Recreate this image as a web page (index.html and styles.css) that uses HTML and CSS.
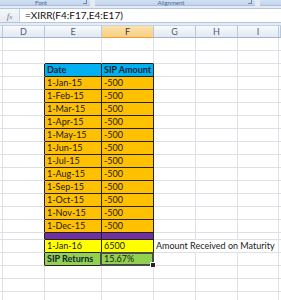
FILE: index.html
```html
<!DOCTYPE html>
<html>
<head>
<meta charset="utf-8">
<link rel="stylesheet" href="styles.css">
</head>
<body>
<div class="ribbon">
  <div class="grp g1"><span class="glabel">Font</span><span class="launch"></span></div>
  <div class="grp g2"><span class="glabel">Alignment</span><span class="launch"></span></div>
  <div class="grp g3"></div>
</div>
<div class="fbar">
  <div class="fx"><span class="fxt">f</span><span class="fxs">x</span></div>
  <div class="formula">=XIRR(F4:F17,E4:E17)</div>
</div>
<div class="sheet">
  <div class="h"></div><div class="h">D</div><div class="h">E</div><div class="h sel">F</div><div class="h">G</div><div class="h">H</div><div class="h">I</div><div class="h"></div>

  <div class="c"></div><div class="c"></div><div class="c"></div><div class="c"></div><div class="c"></div><div class="c"></div><div class="c"></div><div class="c"></div>
  <div class="c"></div><div class="c"></div><div class="c tb"></div><div class="c tb"></div><div class="c"></div><div class="c"></div><div class="c"></div><div class="c"></div>

  <div class="c"></div><div class="c lr"></div><div class="c t blue b">Date</div><div class="c t blue b">SIP Amount</div><div class="c"></div><div class="c"></div><div class="c"></div><div class="c"></div>
  <div class="c"></div><div class="c lr"></div><div class="c t org">1-Jan-15</div><div class="c t org">-500</div><div class="c"></div><div class="c"></div><div class="c"></div><div class="c"></div>
  <div class="c"></div><div class="c lr"></div><div class="c t org">1-Feb-15</div><div class="c t org">-500</div><div class="c"></div><div class="c"></div><div class="c"></div><div class="c"></div>
  <div class="c"></div><div class="c lr"></div><div class="c t org">1-Mar-15</div><div class="c t org">-500</div><div class="c"></div><div class="c"></div><div class="c"></div><div class="c"></div>
  <div class="c"></div><div class="c lr"></div><div class="c t org">1-Apr-15</div><div class="c t org">-500</div><div class="c"></div><div class="c"></div><div class="c"></div><div class="c"></div>
  <div class="c"></div><div class="c lr"></div><div class="c t org">1-May-15</div><div class="c t org">-500</div><div class="c"></div><div class="c"></div><div class="c"></div><div class="c"></div>
  <div class="c"></div><div class="c lr"></div><div class="c t org">1-Jun-15</div><div class="c t org">-500</div><div class="c"></div><div class="c"></div><div class="c"></div><div class="c"></div>
  <div class="c"></div><div class="c lr"></div><div class="c t org">1-Jul-15</div><div class="c t org">-500</div><div class="c"></div><div class="c"></div><div class="c"></div><div class="c"></div>
  <div class="c"></div><div class="c lr"></div><div class="c t org">1-Aug-15</div><div class="c t org">-500</div><div class="c"></div><div class="c"></div><div class="c"></div><div class="c"></div>
  <div class="c"></div><div class="c lr"></div><div class="c t org">1-Sep-15</div><div class="c t org">-500</div><div class="c"></div><div class="c"></div><div class="c"></div><div class="c"></div>
  <div class="c"></div><div class="c lr"></div><div class="c t org">1-Oct-15</div><div class="c t org">-500</div><div class="c"></div><div class="c"></div><div class="c"></div><div class="c"></div>
  <div class="c"></div><div class="c lr"></div><div class="c t org">1-Nov-15</div><div class="c t org">-500</div><div class="c"></div><div class="c"></div><div class="c"></div><div class="c"></div>
  <div class="c"></div><div class="c lr"></div><div class="c t org">1-Dec-15</div><div class="c t org">-500</div><div class="c"></div><div class="c"></div><div class="c"></div><div class="c"></div>
  <div class="c"></div><div class="c lr"></div><div class="c t pur"></div><div class="c t pur"></div><div class="c"></div><div class="c"></div><div class="c"></div><div class="c"></div>
  <div class="c"></div><div class="c lr"></div><div class="c t yel">1-Jan-16</div><div class="c t yel">6500</div><div class="c nr">Amount Received on Maturity</div><div class="c nr"></div><div class="c"></div><div class="c"></div>
  <div class="c"></div><div class="c lr"></div><div class="c t grn b">SIP Returns</div><div class="c t grn active">15.67%</div><div class="c"></div><div class="c"></div><div class="c"></div><div class="c"></div>

  <div class="c"></div><div class="c"></div><div class="c"></div><div class="c"></div><div class="c"></div><div class="c"></div><div class="c"></div><div class="c"></div>
  <div class="c"></div><div class="c"></div><div class="c"></div><div class="c"></div><div class="c"></div><div class="c"></div><div class="c"></div><div class="c"></div>
  <div class="c"></div><div class="c"></div><div class="c"></div><div class="c"></div><div class="c"></div><div class="c"></div><div class="c"></div><div class="c"></div>
</div>
</body>
</html>
```

FILE: styles.css
```css
* { box-sizing: border-box; }
html, body { margin: 0; padding: 0; }
body {
  width: 281px;
  height: 300px;
  overflow: hidden;
  background: #e4ebf5;
  font-family: Lato, "Liberation Sans", sans-serif;
}

.ribbon {
  display: flex;
  height: 6px;
  gap: 5px;
}
.grp {
  position: relative;
  height: 6px;
  background: linear-gradient(#d2e0f2, #c3d5ed);
  border-bottom: 1px solid #a9bfdc;
}
.g1 { width: 90px; }
.g2 { width: 160px; }
.g3 { flex: 1; }
.glabel {
  display: block;
  font-size: 6px;
  line-height: 6px;
  color: #4a6a9a;
  text-align: center;
  padding-right: 8px;
}
.launch {
  position: absolute;
  right: 3px;
  bottom: 1px;
  width: 4px;
  height: 4px;
  border-right: 1px solid #6a86ad;
  border-bottom: 1px solid #6a86ad;
}

.fbar {
  display: flex;
  height: 15px;
  margin-top: 2px;
  border-top: 1px solid #b5c6dc;
  border-bottom: 1px solid #b5c6dc;
}
.fx {
  width: 20px;
  background: linear-gradient(#f4f6f9, #e6ebf2);
  border-right: 1px solid #c5d1e0;
  display: flex;
  justify-content: center;
  align-items: center;
  font-family: "Liberation Serif", serif;
  font-style: italic;
  color: #6c7f99;
  font-size: 9px;
  line-height: 10px;
}
.fxs { font-size: 7px; margin-top: 2px; }
.formula {
  flex: 1;
  background: #fff;
  font-size: 10px;
  line-height: 13px;
  padding-left: 5px;
  color: #111;
}

.sheet {
  margin-top: 2px;
  display: grid;
  grid-template-columns: 3px 42px 57px 52px 42px 42px 41px 2px;
  grid-template-rows: repeat(16, 13px) 7px;
  grid-auto-rows: 13px;
  background: #fff;
}
.h {
  background: linear-gradient(#f7f9fc, #e2e9f3);
  border-right: 1px solid #b8c8dc;
  border-bottom: 1px solid #9eb6ce;
  border-top: 1px solid #c8d4e3;
  font-size: 9px;
  line-height: 11px;
  text-align: center;
  color: #4c5f7c;
}
.h.sel {
  background: linear-gradient(#fbe2ad, #f7cf7f);
  border-bottom: 1px solid #f29b3a;
  color: #3c3c3c;
}
.c {
  border-right: 1px solid #dde1e6;
  border-bottom: 1px solid #dde1e6;
  font-size: 9px;
  line-height: 12px;
  padding-left: 2px;
  white-space: nowrap;
  color: #1a1a1a;
}
.c.nr { border-right-color: transparent; }
.c.lr { border-right-color: #222; }
.c.tb { border-bottom-color: #222; }
.c.t { border-right-color: #222; border-bottom-color: #222; }
.b { font-weight: bold; color: #0f2433; }
.blue { background: #00b0f0; }
.org { background: #ffc000; }
.pur { background: #7030a0; }
.yel { background: #ffff00; }
.grn { background: #92d050; }
.active { position: relative; }
.active::after {
  content: "";
  position: absolute;
  left: -2px;
  top: -1px;
  right: -1px;
  bottom: -1px;
  border: 2px solid #4a4a4a;
}
.active::before {
  content: "";
  position: absolute;
  right: -3px;
  bottom: -3px;
  width: 4px;
  height: 4px;
  background: #222;
  border: 1px solid #fff;
  z-index: 1;
}
```
